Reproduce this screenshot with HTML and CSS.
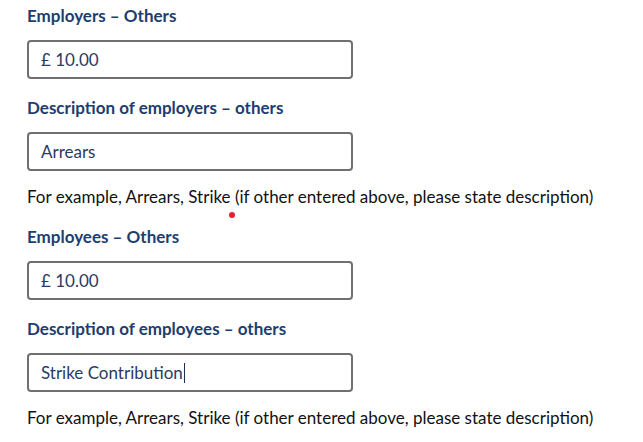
FILE: index.html
```html
<!DOCTYPE html>
<html lang="en">
<head>
<meta charset="utf-8">
<title>Others</title>
<link rel="stylesheet" href="styles.css">
</head>
<body>
<form class="form">
  <div class="group">
    <label class="label">Employers – Others</label>
    <div class="field">£ 10.00</div>
  </div>
  <div class="group">
    <label class="label">Description of employers – others</label>
    <div class="field">Arrears</div>
  </div>
  <p class="help">For example, Arrears, Strike (if other entered above, please state description)</p>
  <div class="group">
    <label class="label">Employees – Others</label>
    <div class="field">£ 10.00</div>
  </div>
  <div class="group">
    <label class="label">Description of employees – others</label>
    <div class="field">Strike Contribution<span class="caret"></span></div>
  </div>
  <p class="help">For example, Arrears, Strike (if other entered above, please state description)</p>
  <span class="dot"></span>
</form>
</body>
</html>
```
FILE: styles.css
```css
html, body {
  margin: 0;
  padding: 0;
  background: #ffffff;
}
body {
  font-family: Lato, "Open Sans", sans-serif;
}
.form {
  position: relative;
  display: flex;
  flex-direction: column;
  padding: 6px 0 0 27px;
}
.group {
  display: flex;
  flex-direction: column;
  margin-bottom: 19px;
}
.label {
  font-weight: 700;
  font-size: 17px;
  line-height: 20px;
  color: #1d3e6e;
  margin-bottom: 14px;
}
.field {
  box-sizing: border-box;
  width: 326px;
  height: 39px;
  border: 2px solid #707070;
  border-radius: 4px;
  padding: 0 12px;
  display: flex;
  align-items: center;
  font-size: 17px;
  color: #2b3b62;
}
.caret {
  display: inline-block;
  width: 1px;
  height: 20px;
  background: #1d2f55;
  margin-left: 1px;
}
.help {
  margin: -3px 0 20px 0;
  font-size: 17px;
  line-height: 20px;
  color: #111111;
}
.dot {
  position: absolute;
  left: 229px;
  top: 212px;
  width: 6px;
  height: 6px;
  border-radius: 50%;
  background: #e8202a;
}
```
